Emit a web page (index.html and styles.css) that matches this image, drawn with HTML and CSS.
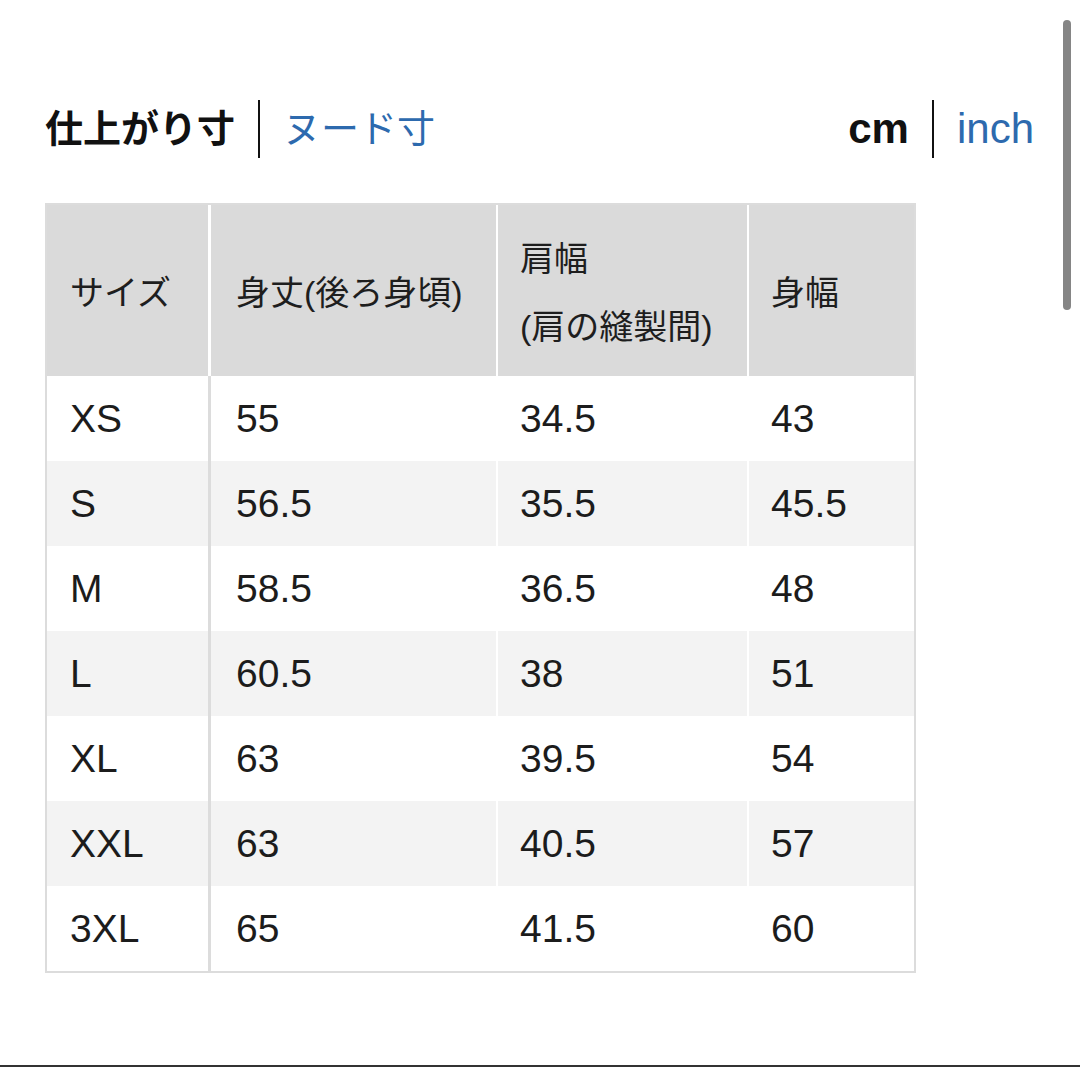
FILE: index.html
```html
<!DOCTYPE html>
<html lang="ja">
<head>
<meta charset="utf-8">
<title>サイズ表</title>
<link rel="stylesheet" href="styles.css">
</head>
<body>
<main class="page">
  <div class="title-bar">
    <div class="toggle">
      <span class="opt active">仕上がり寸</span>
      <span class="sep"></span>
      <span class="opt link">ヌード寸</span>
    </div>
    <div class="toggle">
      <span class="opt active latin">cm</span>
      <span class="sep"></span>
      <span class="opt link latin">inch</span>
    </div>
  </div>

  <table class="size-table">
    <thead>
      <tr>
        <th class="c1">サイズ</th>
        <th class="c2">身丈(後ろ身頃)</th>
        <th class="c3">肩幅<br>(肩の縫製間)</th>
        <th class="c4">身幅</th>
      </tr>
    </thead>
    <tbody>
      <tr><td class="c1">XS</td><td class="c2">55</td><td class="c3">34.5</td><td class="c4">43</td></tr>
      <tr><td class="c1">S</td><td class="c2">56.5</td><td class="c3">35.5</td><td class="c4">45.5</td></tr>
      <tr><td class="c1">M</td><td class="c2">58.5</td><td class="c3">36.5</td><td class="c4">48</td></tr>
      <tr><td class="c1">L</td><td class="c2">60.5</td><td class="c3">38</td><td class="c4">51</td></tr>
      <tr><td class="c1">XL</td><td class="c2">63</td><td class="c3">39.5</td><td class="c4">54</td></tr>
      <tr><td class="c1">XXL</td><td class="c2">63</td><td class="c3">40.5</td><td class="c4">57</td></tr>
      <tr><td class="c1">3XL</td><td class="c2">65</td><td class="c3">41.5</td><td class="c4">60</td></tr>
    </tbody>
  </table>

  <div class="bottom-rule"></div>
</main>
<div class="scrollbar"></div>
</body>
</html>
```

FILE: styles.css
```css
* { box-sizing: border-box; }

html, body {
  margin: 0;
  padding: 0;
  background: #ffffff;
}

body {
  font-family: "Liberation Sans", "Noto Sans CJK JP", sans-serif;
  color: #1c1c1c;
}

.page {
  min-height: 100vh;
  display: flex;
  flex-direction: column;
}

.title-bar {
  margin-top: 100px;
  padding: 0 46px 0 45px;
  height: 58px;
  display: flex;
  justify-content: space-between;
  align-items: center;
}

.toggle {
  display: flex;
  align-items: center;
  gap: 23px;
  height: 58px;
}

.opt {
  font-size: 38px;
  line-height: 1;
}

.opt.latin {
  font-size: 42px;
}

.opt.active {
  font-weight: 700;
  color: #111111;
}

.opt.link {
  color: #2d6aae;
  font-weight: 400;
}

.sep {
  width: 2px;
  height: 58px;
  background: #111111;
}

.size-table {
  margin: 45px 0 0 45px;
  width: 871px;
  table-layout: fixed;
  border-collapse: separate;
  border-spacing: 0;
  border: 2px solid #dcdcdc;
}

.size-table th,
.size-table td {
  padding: 0 0 0 22px;
  text-align: left;
  vertical-align: middle;
  font-weight: 400;
}

.size-table th {
  background: #dadada;
  height: 171px;
  font-size: 34px;
  line-height: 68px;
  color: #1e1e1e;
  padding-top: 4px;
}

.size-table td {
  height: 85px;
  font-size: 39px;
  color: #1c1c1c;
}

.size-table tbody tr:nth-child(even) td {
  background: #f3f3f3;
}

.size-table .c1 {
  width: 164px;
  padding-left: 23px;
  border-right: 3px solid #dcdcdc;
}

.size-table th.c1 {
  border-right-color: #ffffff;
}

.size-table .c2 {
  width: 285px;
  padding-left: 25px;
}

.size-table .c3 {
  width: 251px;
  border-left: 2px solid #ffffff;
}

.size-table .c4 {
  width: 167px;
  border-left: 2px solid #ffffff;
}

.bottom-rule {
  margin-top: auto;
  height: 2px;
  background: #333333;
}

.scrollbar {
  position: fixed;
  top: 20px;
  left: 1063px;
  width: 8px;
  height: 290px;
  border-radius: 4px;
  background: #858585;
}
```
